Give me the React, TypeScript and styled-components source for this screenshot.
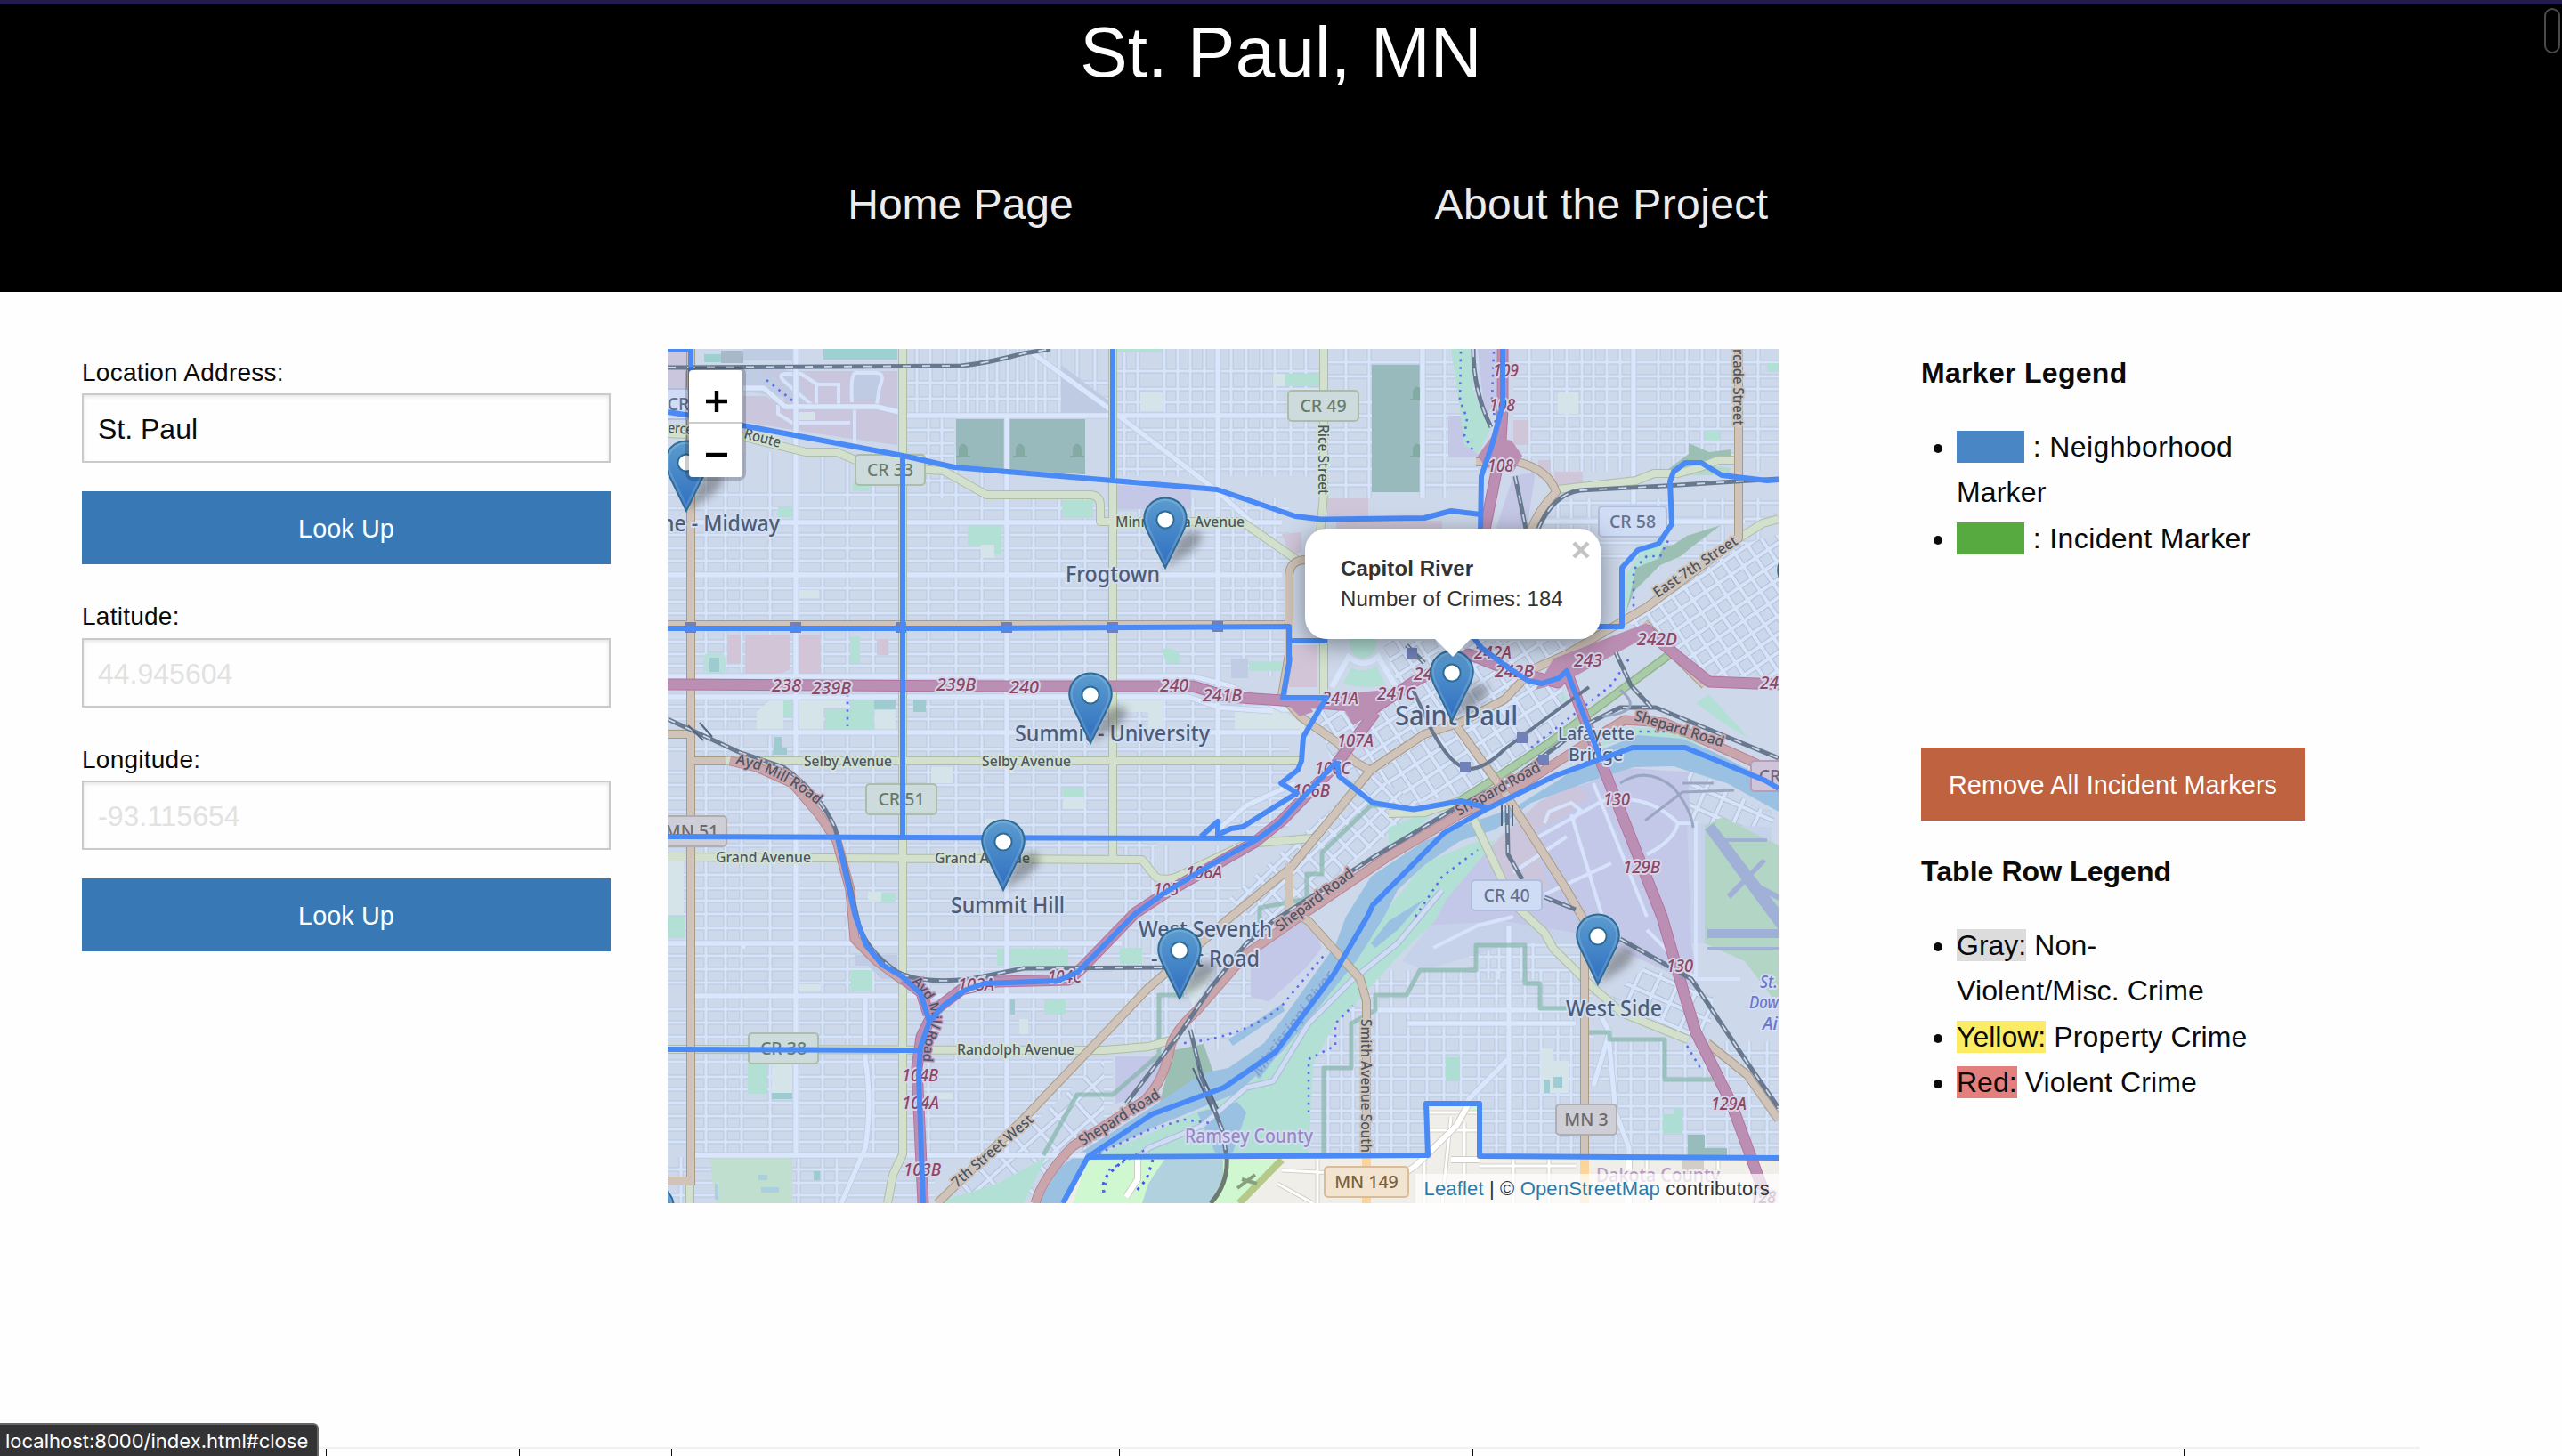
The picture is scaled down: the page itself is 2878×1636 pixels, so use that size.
import React from "react";
import styled, { createGlobalStyle } from "styled-components";

const sans = '"Liberation Sans", Arial, sans-serif';
const mapFont = '"Noto Sans", "Open Sans", sans-serif';

const GlobalStyle = createGlobalStyle`
  *, *::before, *::after { box-sizing: border-box; }
  body { margin: 0; background: #fefefe; color: #0a0a0a; font-family: ${sans}; }
`;

/* ---------- page frame ---------- */

const Page = styled.div`
  position: relative;
  display: flex;
  flex-direction: column;
  width: 2878px;
  height: 1636px;
  overflow: hidden;
  background: #fefefe;
`;

const Header = styled.header`
  flex: none;
  height: 328px;
  background: #000;
  border-top: 5px solid #231c4d;
`;

const Title = styled.h1`
  margin: 0;
  padding-top: 2px;
  font-size: 80px;
  font-weight: 400;
  line-height: 104px;
  letter-spacing: 0.2px;
  text-align: center;
  color: #fefefe;
`;

const Nav = styled.nav`
  display: grid;
  grid-template-columns: 720px 720px;
  justify-content: center;
  padding-top: 89px;
`;

const NavLink = styled.a<{ $spacing?: number }>`
  font-size: 48px;
  line-height: 60px;
  letter-spacing: ${(p) => p.$spacing ?? 0}px;
  text-align: center;
  color: #ececec;
`;

const ScrollThumb = styled.div`
  position: absolute;
  top: 9px;
  right: 2px;
  width: 18px;
  height: 51px;
  border: 2px solid #4a4a4a;
  border-radius: 9px;
`;

const Main = styled.main`
  display: flex;
  flex: none;
  height: 1298px;
  padding: 64px 0 0 92px;
`;

/* ---------- search form ---------- */

const Form = styled.div`
  flex: none;
  width: 594px;
`;

const Label = styled.label`
  display: block;
  height: 50.4px;
  padding-top: 2px;
  font-size: 28px;
  line-height: 50.4px;
  letter-spacing: 0.25px;
`;

const Input = styled.input`
  display: block;
  width: 100%;
  height: 78px;
  margin: 0 0 32px;
  padding: 3px 16px 0;
  border: 2px solid #cacaca;
  border-radius: 0;
  outline: none;
  background: #fefefe;
  box-shadow: inset 0 2px 4px rgba(10, 10, 10, 0.1);
  font-family: ${sans};
  font-size: 32px;
  color: #0a0a0a;
  &::placeholder { color: #e2e2e2; opacity: 1; }
`;

const Button = styled.button<{ $tone: string; $wide?: boolean }>`
  display: block;
  width: ${(p) => (p.$wide ? "100%" : "431px")};
  height: 81.8px;
  margin: 0 0 32px;
  padding: 3px 0 0;
  border: 0;
  background: ${(p) => p.$tone};
  font-family: ${sans};
  font-size: 28.8px;
  letter-spacing: 0.1px;
  color: #fefefe;
  white-space: nowrap;
`;

/* ---------- legend ---------- */

const Legend = styled.aside`
  flex: none;
  width: 431px;
  margin-left: 160px;
  padding-top: 2px;
`;

const LegendTitle = styled.p<{ $spacing: number }>`
  margin: 0 0 32px;
  font-size: 32px;
  font-weight: 700;
  line-height: 51.2px;
  letter-spacing: ${(p) => p.$spacing}px;
`;

const LegendList = styled.ul<{ $height?: number }>`
  height: ${(p) => (p.$height ? `${p.$height}px` : "auto")};
  margin: 0;
  padding: 0 0 0 40px;
  list-style: disc outside;
  font-size: 32px;
  line-height: 51.2px;
  letter-spacing: 0.15px;
  white-space: nowrap;
`;

const Swatch = styled.span<{ $tone: string }>`
  padding-left: 76.4px;
  background: ${(p) => p.$tone};
`;

const Wider = styled.span`
  letter-spacing: 0.4px;
`;

const Mark = styled.span<{ $tone: string }>`
  letter-spacing: 0;
  background: ${(p) => p.$tone};
`;

/* ---------- map chrome ---------- */

const MapBox = styled.div`
  position: relative;
  flex: none;
  width: 1248px;
  height: 960px;
  margin-left: 64px;
  overflow: hidden;
  background: #cdd8ea;
`;

const MapSvg = styled.svg`
  display: block;
  width: 1248px;
  height: 960px;
`;

const ZoomControl = styled.div`
  position: absolute;
  left: 20px;
  top: 20px;
  display: flex;
  flex-direction: column;
  width: 68px;
  border: 4px solid rgba(0, 0, 0, 0.2);
  border-radius: 8px;
  background-clip: padding-box;
`;

const ZoomButton = styled.div<{ $first?: boolean }>`
  display: flex;
  justify-content: center;
  height: 60px;
  padding: 22px 0 0 2px;
  background: #fff;
  border-bottom: ${(p) => (p.$first ? "2px solid #ccc" : "0")};
  border-radius: ${(p) => (p.$first ? "4px 4px 0 0" : "0 0 4px 4px")};
`;

const Popup = styled.div`
  position: absolute;
  left: 716px;
  top: 202px;
  width: 332px;
  height: 124px;
  padding: 28px 0 0 40px;
  border-radius: 24px;
  background: #fff;
  box-shadow: 0 6px 28px rgba(0, 0, 0, 0.4);
  font-size: 24px;
  line-height: 33.6px;
  letter-spacing: 0.08px;
  color: #333;
  white-space: nowrap;
`;

const PopupTip = styled.div`
  position: absolute;
  left: 861px;
  top: 325px;
  width: 0;
  height: 0;
  border-left: 21px solid transparent;
  border-right: 21px solid transparent;
  border-top: 21px solid #fff;
`;

const PopupClose = styled.svg`
  position: absolute;
  right: 12px;
  top: 14px;
  width: 20px;
  height: 20px;
`;

const Attribution = styled.div`
  position: absolute;
  right: 0;
  bottom: 0;
  height: 33px;
  padding: 0 10px;
  background: rgba(255, 255, 255, 0.7);
  font-size: 22px;
  line-height: 33px;
  letter-spacing: 0.15px;
  color: #333;
  white-space: nowrap;
  a { color: #2f7ba8; }
`;

/* ---------- table head and status bubble ---------- */

const TableHead = styled.div`
  display: flex;
  flex: none;
  width: 2558px;
  height: 10px;
  margin-left: 160px;
  border-top: 2px solid #f1f1f1;
`;

const HeadCell = styled.div<{ $w: number; $last?: boolean }>`
  flex: none;
  width: ${(p) => p.$w}px;
  border-right: ${(p) => (p.$last ? "0" : "1px solid #0a0a0a")};
`;

const StatusBubble = styled.div`
  position: absolute;
  left: 0;
  bottom: 0;
  width: 358px;
  height: 37px;
  padding-left: 6px;
  border-top: 2px solid #666668;
  border-right: 2px solid #666668;
  border-top-right-radius: 6px;
  background: #333335;
  font-family: Inter, sans-serif;
  font-size: 22px;
  line-height: 36px;
  color: #fff;
  white-space: nowrap;
`;

/* ---------- map data ---------- */

type Grid = { x: [number, number]; y: [number, number]; xs: number[]; ys: number[] };

const WEST_XS = [793, 815, 833, 865, 924, 952, 981, 1043, 1074, 1103, 1161, 1190, 1219, 1280, 1308, 1340, 1397, 1427];

const grids: Grid[] = [
  { x: [750, 1140], y: [508, 700], xs: [793, 815, 833, 865, 924, 952, 981, 1043, 1074, 1103], ys: [556, 571, 601, 616, 630, 661, 676, 689] },
  { x: [1131, 1448], y: [560, 700], xs: [1161, 1190, 1219, 1280, 1308, 1340, 1385, 1400, 1417, 1432], ys: [571, 601, 616, 630, 661, 676, 689] },
  { x: [1018, 1250], y: [392, 470], xs: [1030, 1045, 1061, 1077, 1087, 1098, 1109, 1120, 1132, 1143, 1153, 1164, 1174, 1190, 1210, 1230], ys: [430, 448] },
  { x: [1018, 1072], y: [470, 560], xs: [1043, 1058], ys: [483, 498, 512, 540] },
  { x: [1254, 1484], y: [392, 535], xs: [1263, 1278, 1308, 1323, 1337, 1353, 1383, 1400, 1417, 1432, 1450, 1467], ys: [417, 437, 452, 483, 497, 512, 527] },
  { x: [1491, 1600], y: [392, 560], xs: [1512, 1538], ys: [407, 423, 452, 467, 483, 497, 512, 527, 545] },
  { x: [1598, 1660], y: [392, 560], xs: [1623], ys: [407, 423, 437, 452, 467, 482, 497, 511, 527, 545] },
  { x: [1700, 1998], y: [392, 530], xs: [1718, 1743, 1760, 1777, 1790, 1805, 1820, 1863, 1880, 1895, 1912, 1930, 1975], ys: [407, 423, 437, 452, 467, 482, 497, 511] },
  { x: [1735, 1998], y: [560, 640], xs: [1750, 1765, 1785, 1863, 1915, 1935, 1975], ys: [565, 583, 610, 625] },
  { x: [750, 1448], y: [708, 760], xs: WEST_XS, ys: [721, 735, 748] },
  { x: [750, 1448], y: [780, 940], xs: WEST_XS, ys: [794, 808, 842, 868, 882, 897, 912, 927] },
  { x: [750, 1300], y: [940, 1060], xs: WEST_XS, ys: [950, 983, 998, 1012, 1027, 1043] },
  { x: [750, 1250], y: [1060, 1300], xs: WEST_XS, ys: [1074, 1089, 1104, 1134, 1149, 1165, 1193, 1210, 1224, 1239, 1254, 1269, 1283] },
  { x: [1250, 1420], y: [950, 1180], xs: [1250, 1265, 1280, 1295, 1310, 1340, 1368, 1397], ys: [998, 1012, 1027, 1043, 1074, 1104, 1119, 1134, 1149, 1164] },
  { x: [750, 1050], y: [1300, 1352], xs: [765, 897, 924, 940], ys: [1314, 1329, 1343] },
  { x: [1470, 1790], y: [1090, 1298], xs: [1492, 1507, 1520, 1547, 1563, 1582, 1603, 1622, 1641, 1661, 1681, 1713, 1731, 1750, 1765], ys: [1105, 1119, 1135, 1165, 1183, 1197, 1212, 1230, 1248, 1260, 1275, 1287] },
  { x: [1790, 1998], y: [1170, 1298], xs: [1815, 1832, 1850, 1866, 1893, 1915, 1940, 1965, 1985], ys: [1183, 1198, 1212, 1230, 1243, 1257, 1272, 1287] },
  { x: [1650, 1780], y: [1040, 1100], xs: [1660, 1672, 1684, 1697, 1709, 1722], ys: [1050, 1062, 1075, 1090] },
];

const majorStreets = [
  "M894 392V1300", "M1131 467V1298", "M1368 392V940", "M835 1060V1066", "M750 587H1440", "M750 646H1440",
  "M1018 467H1484", "M750 823H1460", "M750 760H1340L1380 770L1440 797H1455", "M750 783H1335L1370 795L1430 799",
  "M750 1060H1260", "M780 1119H1290", "M780 1298H1220", "M972 1119V1190Q980 1240 972 1290L945 1352", "M1598 392V560",
  "M1835 392V566", "M1695 1040V1298", "M1540 1135H1780", "M1580 1150H1770", "M1160 397L1250 462L1365 550L1410 590",
  "M835 436H858L882 457L920 457H985L1010 463", "M1735 586H1960", "M1365 935L1400 905L1455 880",
  "M1795 1135L1808 1160L1790 1220", "M1807 1165L1815 1250L1830 1290V1352", "M1694 1190L1650 1235L1640 1255",
];

const rotatedGrids = [
  { clip: "M1478 800L1560 720H1760L1750 830L1700 870L1640 892L1560 908L1500 870Z", cx: 1620, cy: 810, angle: -33, step: 19, size: 330 },
  { clip: "M1380 1010L1540 870L1600 905L1500 985L1420 1040Z", cx: 1480, cy: 950, angle: -44, step: 19, size: 260 },
  { clip: "M1830 700L1955 612L1998 600V760L1930 760L1880 735Z", cx: 1920, cy: 690, angle: -34, step: 17, size: 250 },
  { clip: "M1070 1340L1160 1262L1240 1190V1270L1180 1320L1150 1352H1060Z", cx: 1150, cy: 1290, angle: -42, step: 26, size: 260 },
  { clip: "M1810 1120L1850 1085L1925 1120L1920 1170L1895 1165Z", cx: 1860, cy: 1130, angle: 24, step: 22, size: 150 },
  { clip: "M1895 860L1998 920V930L1900 925Z", cx: 1920, cy: 900, angle: 24, step: 22, size: 150 },
];

const areas: [string, string][] = [
  ["#bfcce4", "M835 392H890V405H835ZM783 410H880L905 450L840 440Z"],
  ["#c9c6dd", "M750 392H772V440H750ZM845 417H1008V500L950 492L835 474V445L860 445L885 460L870 420Z"],
  ["#bfcbe3", "M874 420H895L908 452L882 450ZM957 420H992L988 450H957ZM1192 410L1245 450V464H1192Z"],
  ["#9dd0d0", "M791 398H810V407H791ZM925 392H1008V404H925Z"],
  ["#a9b8c8", "M810 394H835V408H810Z"],
  ["#b3e0d5", "M1254 392H1305V396H1254ZM1444 420H1482V434H1444ZM874 569H890V581H874ZM958 543H978V552H958ZM1087 590H1125V623H1110V613H1087Z"],
  ["#98babc", "M1074 471H1219V533L1074 525ZM1541 410H1595V553H1541Z"],
  ["#c4c8e6", "M1255 545L1338 550V572H1255ZM1627 467H1660V514H1627ZM1660 392H1680V450L1668 470ZM1680 595L1700 535L1725 530L1715 595Z"],
  ["#b3e0d5", "M1193 562H1228V582H1193ZM1630 392H1652L1655 440L1675 480L1660 510L1645 500L1640 460Z"],
  ["#d5e4e8", "M1281 441H1306V462H1281ZM1430 420H1443V434H1430ZM895 463H915V472H895ZM1750 441H1773V465H1750ZM1102 612H1117V627H1102ZM898 663H920V672H898Z"],
  ["#cfc6d9", "M1491 560H1537V580H1491ZM1440 600L1462 598V620L1450 625ZM1746 530H1778V545H1746ZM1728 517H1742V537H1728ZM1700 472H1717V500H1700ZM1501 585H1620V594H1501Z"],
  ["#9bc0b3", "M1873 528L1897 510V498L1920 508L1945 505V516L1910 528L1895 532ZM1826 690L1836 640L1845 622L1880 612L1895 602L1933 590L1900 615L1888 625L1865 635L1835 665Z"],
  ["#b3e0d5", "M1915 483H1932V495H1915ZM1985 408H1998V418H1985ZM1827 645L1842 622L1862 612L1872 606L1862 628L1838 638L1826 690Z"],
  ["#b5d8c8", "M1880 535L1908 522L1945 526L1940 534L1900 534Z"],
  ["#d3c5d8", "M837 713H888V752L870 760H837ZM898 713H922V758H898ZM817 713H832V745H817ZM985 718H998V736H985ZM1448 725H1480V772H1448Z"],
  ["#b9dfdc", "M790 737L795 733H812L815 740V755L810 760H795L791 752Z"],
  ["#9dcbd0", "M797 739H808V755H797ZM1026 782H1040V800H1026ZM980 784H1006V797H980ZM870 828H878V840H884V848H868Z"],
  ["#b3e0d5", "M955 715H966V745H955ZM873 785H890V805H873ZM927 797H955V784H982V819H927ZM1305 730Q1315 725 1325 735L1325 745H1310ZM1403 743H1440V754H1403ZM1194 885H1218V896H1194Z"],
  ["#d5e4e8", "M898 783H950V795H925V820H898ZM983 798H1006V820H983ZM850 800L870 782H880V820H850ZM1046 862H1070V880H1046ZM1194 897H1218V909H1194ZM1257 782H1306V820H1290V800H1257ZM1387 797H1440L1465 815V826H1387ZM975 1002H990V1013H975ZM1107 920H1120V935H1107Z"],
  ["#bfcce4", "M1383 740H1402V762H1383ZM961 1073H1008V1100L990 1100L975 1085H961Z"],
  ["#b3e0d5", "M990 1003H1006V1013H990ZM750 1030H770V1054H750ZM956 1090H980V1114H956ZM840 1195H862V1229H840ZM1120 1066H1200V1085H1120ZM1258 1065H1283V1083H1258ZM1173 1123H1197V1140H1173Z"],
  ["#d5e4e8", "M867 1196H890V1228H867ZM898 1106H922V1114H898ZM1145 1145H1155V1162H1145ZM750 968H768V1028H750ZM1330 1105L1365 1090L1340 1132ZM1040 1228H1070V1235H1040Z"],
  ["#9dcbd0", "M867 1228H890V1235H867ZM914 1316H921V1326H914ZM1135 1123H1140V1140H1135Z"],
  ["#c1dfce", "M798 1302H890V1352H805L800 1325Z"],
  ["#a9cfe0", "M852 1320H862V1326H852ZM855 1334H875V1340H855ZM803 1330H807V1348H803Z"],
  ["#b3e0d5", "M1510 760L1520 748H1545L1560 770H1507ZM1515 718H1545L1540 738Q1530 742 1518 736ZM1725 778L1752 770L1760 785L1740 800ZM1905 790L1920 780L1965 830L1940 815Z"],
  ["#a0c9d8", "M1085 1328L1100 1318L1115 1330L1095 1338ZM1530 885L1545 878L1555 890L1545 902Z"],
  ["#c4c8e8", "M1405 1062L1470 1030L1485 1065L1435 1128L1405 1120ZM1253 1187H1312L1300 1225L1253 1240Z"],
  ["#c5d2e9", "M1575 1080L1700 920L1780 880L1990 910V1060H1700L1600 1090Z"],
  ["#c4c8e8", "M1560 1075L1625 990L1700 935L1770 885L1830 863L1900 868L1965 905V912L1920 915L1895 925L1900 1060L1910 1120L1870 1090L1780 1050L1690 1035L1600 1040Z"],
  ["#cbc6dc", "M1665 960L1730 900L1770 880L1785 895L1760 915L1720 935L1740 1000L1700 1000Z"],
];

const waterAreas: [string, string][] = [
  ["#b3e0d5", "M1205 1352L1240 1295L1300 1270L1390 1228L1440 1185L1500 1100L1560 1020L1600 970L1660 945L1680 945L1625 1010L1612 1035L1575 1070L1520 1130L1500 1150L1475 1195L1470 1297H1225ZM1050 1352L1120 1330L1175 1300L1150 1352ZM1560 930L1620 905L1560 960ZM1790 840L1825 817L1890 820L1920 838L1840 828Z"],
  ["#cdd8ea", "M1395 1165L1420 1130L1470 1085L1500 1060L1480 1100L1440 1165L1380 1205L1360 1200Z"],
  ["#9bc0b3", "M1318 1180L1352 1173L1363 1205L1340 1225L1303 1238Z"],
  ["#9bc1e2", "M1166 1352L1190 1312L1215 1294L1300 1240L1350 1206L1380 1200L1420 1172L1448 1135L1500 1062L1512 1030L1540 985L1600 945L1650 925L1700 908L1750 877L1800 842L1840 826L1890 830L1925 845L1998 882V912L1940 880L1880 861L1835 862L1780 880L1720 902L1680 932L1640 945L1600 972L1570 1000L1555 1030L1525 1078L1475 1140L1440 1182L1390 1228L1300 1265L1240 1293L1205 1352Z"],
  ["#9bc1e2", "M1345 1250L1390 1238L1400 1250L1385 1295H1365ZM1380 1168L1440 1128L1443 1136L1385 1175ZM1540 1060L1560 1035L1600 1010L1570 1045L1545 1065Z"],
  ["#b3d5c5", "M1915 928L1935 918L1998 950V1130L1960 1080L1915 1060Z"],
  ["#a1b0d6", "M1915 932L1925 925L1998 1020V1045ZM1918 1044H1998V1054H1918ZM1935 942H1985V946H1935ZM1940 1005L1980 965L1984 968L1944 1010ZM1918 1064H1998V1067H1918ZM1970 990L1998 1005V1012L1968 996Z"],
];

const openAreas: [string, string][] = [
  ["#f0eee8", "M1222 1300H1998V1352H1195ZM1602 1241H1662V1300H1602Z"],
  ["#cff8d0", "M1222 1303H1440L1392 1352H1205ZM1654 1243H1662V1253H1654Z"],
  ["#b0d1dd", "M1283 1352L1290 1330L1308 1303H1374V1325L1360 1352Z"],
  ["#d3cdca", "M1890 1303H1914V1320H1890Z"],
];

const roads = {
  tertiary: [
    "M1014 392V1297L1003 1320L997 1352", "M1250 392V965", "M815 855H1462", "M750 963L1283 966L1298 985Q1305 990 1320 986L1400 948L1475 942",
    "M750 1179L1240 1180L1290 1176L1318 1168", "M750 487L836 491L905 508H940L975 523L1060 529L1108 556H1225Q1236 557 1236 568V586H1395L1458 630",
    "M1487 392V555L1483 600", "M1487 718V780", "M1750 550L1838 540L1858 532H1885L1910 525L1930 517H1950", "M1953 605L1980 588L1998 583",
    "M1654 918L1700 1015L1735 1048L1745 1066L1790 1110L1822 1138L1896 1168", "M1560 914L1600 913L1640 900", "M775 1330V1352",
  ],
  primary: [
    "M776 392V1332", "M750 1327H778", "M750 702H1448", "M1470 629Q1448 628 1448 648V735L1440 782L1462 806L1503 835L1520 855L1538 865",
    "M1953 392V605L1850 682L1760 735L1722 752L1690 786L1640 812L1600 825L1540 865L1450 975L1383 1030L1290 1110L1150 1257L1053 1352",
    "M1448 970V1022L1470 1035L1528 1100L1535 1125V1298", "M1632 810L1690 890L1760 1000L1780 1035V1298", "M1847 700L1890 745L1915 770",
    "M1658 519H1705Q1740 528 1748 553Q1728 572 1718 600", "M750 825H775", "M776 855H815", "M1918 1172L1963 1208L1998 1258",
  ],
  trunk: ["M1163 1352Q1172 1322 1205 1288L1285 1237Q1308 1215 1315 1175Q1320 1158 1345 1135L1400 1072L1460 1030L1560 962L1640 915L1700 888L1790 830L1825 809L1870 812L1960 852L1998 870", "M820 855L850 862L890 880L920 915L940 945L955 1000L960 1055L985 1080L1015 1102"],
  motorway: [
    "M750 769L1130 771H1340L1380 783L1440 787L1545 795L1590 765L1650 735L1700 755L1750 767L1770 745L1850 708L1885 738L1920 766L1998 769",
    "M1688 392V460L1685 510L1667 600", "M1037 1352L1030 1200L1035 1165L1050 1135L1080 1112L1120 1103L1200 1101L1215 1088L1275 1026L1310 1003L1410 946L1440 922L1500 860L1545 800", "M1015 1100L1035 1115L1043 1140",
    "M1760 755L1800 860L1867 1030L1890 1110L1905 1160L1945 1240L1986 1352",
  ],
};

const rails = [
  "M750 413L1080 411Q1110 408 1150 397L1180 392", "M750 808L830 845L880 862Q920 890 938 930L950 975L965 1040Q975 1070 1008 1092Q1035 1106 1090 1100L1150 1088L1310 1087L1350 1080",
  "M1655 392Q1655 440 1675 480", "M1702 535L1714 594", "M1728 594Q1745 555 1775 551L1870 546L1998 538", "M1265 1240L1325 1162L1360 1110L1400 1060L1430 1035L1540 965L1640 905L1700 875L1780 815L1820 795H1860L1998 852",
  "M1337 1157L1350 1210L1373 1270L1378 1300", "M1815 733L1832 770L1855 795", "M1693 905L1694 960L1710 988", "M1735 1008L1770 1022", "M1820 1055L1900 1100L1960 1190L1998 1245", "M1580 725L1600 745",
];

const trailPaths = ["M1234 1296L1290 1270L1330 1258L1360 1262", "M861 427L880 442L890 450", "M1641 395L1640 450L1648 470L1645 490L1657 510", "M1678 395L1676 450L1680 475", "M1240 1340L1245 1315L1290 1290", "M1835 690V640L1850 625H1865L1875 605", "M1560 965L1600 935", "M1590 1030L1620 985L1660 955", "M1330 1172Q1400 1165 1440 1130L1490 1070", "M1470 1250V1190L1500 1175V1150L1520 1130", "M1720 840L1810 770L1830 740", "M1790 822H1880", "M952 780V816", "M1895 1175L1910 1200"];
const cyclePaths = ["M1172 1298L1210 1230H1250L1302 1185V1118H1330", "M1560 1118H1580L1595 1090H1658V1062H1713V1105H1730V1133H1780V1160H1808V1168H1870V1213H1925", "M1487 1298V1200H1518V1150L1545 1135V1118H1560", "M1415 1040V1020L1468 1010V982H1485V958L1540 905L1560 905"];

const boundaries = [
  "M750 392H776V467", "M750 463L776 467L1014 512L1072 525L1250 540L1367 550L1455 580L1484 583.5L1600 582L1630 574L1663 578",
  "M1014 512V940", "M1250 392V540", "M750 706L1100 706L1448 704V745L1441 784H1490L1464 828L1462 855L1458 865L1439 880L1457 891L1396 929L1383 931L1368 938", "M1349 940L1368 923V941",
  "M1448 720H1491", "M750 940L1010 941L1414 942", "M1502 855L1437 925L1414 942L1353 976L1307 1004L1275 1027L1211 1092L1188 1102L1106 1105L1083 1113L1060 1130L1044 1148L1034 1177L1032 1209L1037 1352",
  "M1502 855L1504 872L1542 902L1588 909.5L1641 900L1672 908", "M941 942L961 1030L973 1062L991 1084L1013 1097L1034 1116L1044 1148", "M750 1179L1034 1180",
  "M1194 1352L1222 1300L1294 1252L1375 1222L1433 1182L1498 1095L1536 1030L1542 1017L1622 936L1672 908L1746 872L1798 853L1834 840H1893L1983 877L1998 886",
  "M1655 716L1664 728L1698 753L1717 765L1732 768L1751 762L1760 754L1798 853", "M1688 392V455L1676 500L1664 535L1663 600",
  "M1998 539L1985 540L1934 534L1911 520H1893L1880 530L1876 541L1878 589L1863 611L1840 618L1822 638V704H1790", "M1222 1300L1604 1298L1602 1240H1662V1299L1998 1301",
];

type Txt = { t: string; x: number; y: number; w: number; s?: number; r?: number; c?: string; i?: boolean; b?: boolean; h?: string };

const PLACE = "#4c5c78";
const STREET = "#4a5566";
const labels: Txt[] = [
  { t: "Frogtown", x: 1197, y: 654, w: 106, s: 25, c: PLACE },
  { t: "ne - Midway", x: 743, y: 597, w: 133, s: 25, c: PLACE },
  { t: "Summit - University", x: 1140, y: 833, w: 219, s: 25, c: PLACE },
  { t: "Summit Hill", x: 1068, y: 1026, w: 128, s: 25, c: PLACE },
  { t: "West Seventh", x: 1279, y: 1053, w: 150, s: 25, c: PLACE },
  { t: "- Fort Road", x: 1293, y: 1086, w: 122, s: 25, c: PLACE },
  { t: "West Side", x: 1759, y: 1142, w: 108, s: 25, c: PLACE },
  { t: "Saint Paul", x: 1567, y: 815, w: 138, s: 30, c: PLACE },
  { t: "Lafayette", x: 1750, y: 831, w: 86, s: 20, c: PLACE },
  { t: "Bridge", x: 1762, y: 855, w: 61, s: 20, c: PLACE },
  { t: "Ramsey County", x: 1331, y: 1284, w: 144, s: 21, c: "#9a87c3" },
  { t: "Dakota County", x: 1793, y: 1328, w: 139, s: 21, c: "#b79bc0", h: "#f0eee8" },
  { t: "Selby Avenue", x: 903, y: 861, w: 99, s: 16.5, h: "#d3e1cf" },
  { t: "Selby Avenue", x: 1103, y: 861, w: 100, s: 16.5, h: "#d3e1cf" },
  { t: "Grand Avenue", x: 804, y: 969, w: 107, s: 16.5, h: "#d3e1cf" },
  { t: "Grand Avenue", x: 1050, y: 970, w: 107, s: 16.5, h: "#d3e1cf" },
  { t: "Minnehaha Avenue", x: 1253, y: 592, w: 145, s: 16.5, h: "#d3e1cf" },
  { t: "Randolph Avenue", x: 1075, y: 1185, w: 132, s: 16.5, h: "#d3e1cf" },
  { t: "erce", x: 750, y: 486, w: 28, s: 16, r: 4, h: "#d3e1cf" },
  { t: "Route", x: 835, y: 492, w: 42, s: 16.5, r: 15, h: "#d3e1cf" },
  { t: "Rice Street", x: 1481, y: 477, w: 79, s: 16.5, r: 90, h: "#d3e1cf" },
  { t: "rcade Street", x: 1947, y: 392, w: 86, s: 16.5, r: 90, h: "#d0c4ba" },
  { t: "East 7th Street", x: 1862, y: 672, w: 110, s: 16.5, r: -34, h: "#d0c4ba" },
  { t: "Shepard Road", x: 1639, y: 917, w: 106, s: 16.5, r: -29, h: "#c9a5ac" },
  { t: "Shepard Road", x: 1835, y: 809, w: 104, s: 16.5, r: 17, h: "#c9a5ac" },
  { t: "Shepard Road", x: 1216, y: 1288, w: 104, s: 16.5, r: -32, h: "#c9a5ac" },
  { t: "Shepard Road", x: 1438, y: 1047, w: 105, s: 16.5, r: -37, h: "#c9a5ac" },
  { t: "7th Street West", x: 1075, y: 1335, w: 115, s: 16.5, r: -41, h: "#d0c4ba" },
  { t: "Smith Avenue South", x: 1529, y: 1145, w: 150, s: 16.5, r: 90, h: "#d0c4ba" },
  { t: "Mississippi River", x: 1414, y: 1210, w: 142, s: 16, r: -53, c: "#7d9fd2", i: true, h: "#9bc1e2" },
  { t: "St.", x: 1977, y: 1110, w: 20, s: 20, c: "#6c76cc", i: true },
  { t: "Dow", x: 1965, y: 1133, w: 33, s: 20, c: "#6c76cc", i: true },
  { t: "Ai", x: 1980, y: 1157, w: 17, s: 20, c: "#6c76cc", i: true },
];

const exits: [string, number, number, number][] = [
  ["109", 1677, 423, 29], ["108", 1673, 462, 29], ["108", 1671, 530, 29], ["238", 867, 777, 33], ["239B", 912, 780, 44], ["239B", 1052, 776, 44],
  ["240", 1134, 779, 33], ["240", 1303, 777, 32], ["241B", 1351, 788, 44], ["241A", 1485, 791, 41], ["241C", 1547, 786, 43], ["242", 1588, 764, 32],
  ["242A", 1656, 740, 42], ["242B", 1679, 761, 44], ["243", 1768, 749, 32], ["242D", 1839, 725, 45], ["24", 1977, 774, 21], ["107A", 1502, 839, 41],
  ["106C", 1477, 870, 40], ["106B", 1452, 895, 42], ["106A", 1332, 987, 41], ["105", 1296, 1006, 28], ["130", 1801, 905, 30], ["129B", 1823, 981, 42],
  ["130", 1872, 1092, 30], ["129A", 1922, 1247, 40], ["104B", 1013, 1215, 41], ["104A", 1013, 1246, 42], ["103B", 1015, 1321, 42], ["103A", 1076, 1113, 41],
  ["104C", 1177, 1104, 38], ["128", 1966, 1352, 29],
];

type Shield = { t: string; x: number; y: number; w: number; tone: "green" | "blue" | "tan" | "gray" | "pink" };
const tones = {
  green: ["#cddbdc", "#abbca9", "#697c6c"],
  blue: ["#cfdcf4", "#afbedc", "#65728f"],
  tan: ["#f3e4cf", "#dabd98", "#7a5f3c"],
  gray: ["#cecfd6", "#b1aeb2", "#6d6a6c"],
  pink: ["#cfc5da", "#b59db8", "#75657c"],
};
const shields: Shield[] = [
  { t: "CR", x: 725, y: 437, w: 74, tone: "blue" },
  { t: "CR 33", x: 961, y: 511, w: 78, tone: "green" },
  { t: "CR 49", x: 1447, y: 439, w: 79, tone: "green" },
  { t: "CR 58", x: 1796, y: 569, w: 76, tone: "blue" },
  { t: "CR 51", x: 973, y: 881, w: 79, tone: "green" },
  { t: "CR 38", x: 841, y: 1161, w: 78, tone: "green" },
  { t: "MN 51", x: 738, y: 917, w: 78, tone: "gray" },
  { t: "CR 40", x: 1653, y: 989, w: 79, tone: "blue" },
  { t: "MN 3", x: 1748, y: 1241, w: 68, tone: "gray" },
  { t: "MN 149", x: 1488, y: 1311, w: 94, tone: "tan" },
  { t: "CR", x: 1967, y: 855, w: 42, tone: "pink" },
];

const pins: [number, number][] = [[733, 1412], [771, 575], [2021, 697], [1309, 639], [1631, 811], [1225, 836], [1127, 1001], [1795, 1107], [1325, 1123]];
const stations: [number, number][] = [[1586, 734], [1646, 862], [1710, 829], [1734, 854], [776, 705], [894, 705], [1012, 705], [1131, 705], [1250, 705], [1368, 704]];
const tombs: [number, number][] = [[1082, 512], [1146, 512], [1210, 512], [1592, 448], [1592, 512]];

/* ---------- map drawing ---------- */

const gridPath = (g: Grid) =>
  g.xs.filter((x) => x > g.x[0] && x < g.x[1]).map((x) => `M${x} ${g.y[0]}V${g.y[1]}`).join("") +
  g.ys.map((y) => `M${g.x[0]} ${y}H${g.x[1]}`).join("");

const streetPath = grids.map(gridPath).join("");

const turnedPath = (size: number, step: number) => {
  let d = "";
  for (let v = -size / 2; v <= size / 2; v += step) {
    d += `M${v} ${-size / 2}V${size / 2}M${-size / 2} ${v}H${size / 2}`;
  }
  return d;
};

function Cased({ d, fill, casing, w, edge = 2 }: { d: string; fill: string; casing: string; w: number; edge?: number }) {
  return (
    <g fill="none" strokeLinejoin="round">
      <path d={d} stroke={casing} strokeWidth={w + edge} />
      <path d={d} stroke={fill} strokeWidth={w} />
    </g>
  );
}

function MapText({ t, x, y, w, s = 16, r = 0, c = STREET, i, b, h = "#d2def2" }: Txt) {
  return (
    <text
      transform={`translate(${x} ${y}) rotate(${r})`}
      textLength={w}
      lengthAdjust="spacingAndGlyphs"
      fontFamily={mapFont}
      fontSize={s}
      fontStyle={i ? "italic" : "normal"}
      fontWeight={b ? 600 : 500}
      fill={c}
      stroke={h}
      strokeWidth={4}
      strokeLinejoin="round"
      paintOrder="stroke"
    >
      {t}
    </text>
  );
}

function Pin({ x, y }: { x: number; y: number }) {
  return (
    <g transform={`translate(${x - 25} ${y - 81})`}>
      <path d="M25 80L38 50Q50 34 64 40Q70 48 54 62Z" fill="#2a2a2a" opacity="0.36" filter="url(#pinShadow)" />
      <path
        d="M25 1.5C11.5 1.5 1.2 12 1.2 25C1.2 33 5 39 8 45L25 80L42 45C45 39 48.8 33 48.8 25C48.8 12 38.5 1.5 25 1.5Z"
        fill="url(#pinFill)"
        stroke="#2e6c97"
        strokeWidth="2"
      />
      <path
        d="M25 3.8C13 3.8 3.6 13.4 3.6 25C3.6 32 7 38 10 44L25 75L40 44C43 38 46.4 32 46.4 25C46.4 13.4 37 3.8 25 3.8Z"
        fill="none"
        stroke="#fff"
        strokeOpacity="0.14"
        strokeWidth="2.4"
      />
      <circle cx="25" cy="26" r="9.6" fill="#fff" stroke="#2e6c97" strokeWidth="2" />
    </g>
  );
}

function CityMap() {
  return (
    <MapSvg viewBox="750 392 1248 960">
      <defs>
        <linearGradient id="pinFill" x1="0" y1="0" x2="0" y2="1">
          <stop offset="0" stopColor="#5b9ccf" />
          <stop offset="1" stopColor="#2e6ec0" />
        </linearGradient>
        <filter id="pinShadow" x="-50%" y="-50%" width="200%" height="200%">
          <feGaussianBlur stdDeviation="5" />
        </filter>
        <clipPath id="openClip">
          <path d="M1222 1300H1998V1352H1195ZM1602 1241H1662V1300H1602Z" />
        </clipPath>
        <clipPath id="cemeteryClip">
          <path d="M1074 471H1219V533H1074ZM1541 410H1595V553H1541Z" />
        </clipPath>
        <path id="aydMill" d="M826 858Q880 870 922 908" />
        <path id="aydMillSouth" d="M1024 1103Q1050 1128 1046 1150Q1036 1172 1037 1200" />
        {rotatedGrids.map((g, i) => (
          <clipPath id={`turned${i}`} key={i}><path d={g.clip} /></clipPath>
        ))}
      </defs>

      <rect x="750" y="392" width="1248" height="960" fill="#cdd8ea" />
      <Cased d={streetPath} fill="#d6e3f9" casing="#b9c7db" w={3.2} edge={1.8} />
      {areas.map(([fill, d], i) => <path key={i} d={d} fill={fill} />)}
      {rotatedGrids.map((g, i) => (
        <g key={i} clipPath={`url(#turned${i})`}>
          <path d={g.clip} fill="#cbd7ea" />
          <g transform={`translate(${g.cx} ${g.cy}) rotate(${g.angle})`}>
            <Cased d={turnedPath(g.size, g.step)} fill="#d6e3f9" casing="#b3c1d8" w={4} edge={2} />
          </g>
        </g>
      ))}
      <g fill="none" stroke="#d6e3fa" strokeWidth="4">
        <path d="M884 420Q870 420 885 432L912 455M884 420H900L918 432H942V455M917 432V455M957 452Q955 418 962 419H985Q995 420 988 435L985 455M874 455V465L890 475H955M960 455V500" />
        <path d="M1735 925L1740 912L1765 902L1775 910L1768 920" />
        <path d="M1765 915L1800 1030M1790 880L1850 1030M1720 945L1800 900Q1850 890 1885 925H1905V1100M1700 980L1760 940M1735 1005L1810 970M1850 960Q1880 945 1885 925" />
        <path d="M1850 1045L1905 1100L1955 1100M1610 1065L1660 1040L1700 1030" />
      </g>
      <path d="M1505 745L1520 716H1550L1575 780H1498Z" fill="#cdd8ea" />
      <path d="M1509 768L1518 750Q1532 758 1546 748L1557 770Q1530 775 1509 768ZM1516 718H1546Q1548 738 1530 740Q1516 738 1516 718Z" fill="#b3e0d5" />
      <path d="M1496 772L1515 738Q1532 752 1548 738L1572 778" fill="none" stroke="#d8e5fb" strokeWidth="6" />
      {waterAreas.map(([fill, d], i) => <path key={i} d={d} fill={fill} />)}
      <Cased d="M1230 1350L1290 1290L1350 1265L1400 1222L1430 1215L1470 1150L1520 1100L1570 1060L1620 1000" fill="#cfdcf4" casing="#a9bbd8" w={5} />
      <Cased d={majorStreets.join("")} fill="#d9e6fc" casing="#bdcadf" w={5.4} edge={1.6} />

      {openAreas.map(([fill, d], i) => <path key={i} d={d} fill={fill} />)}
      <g clipPath="url(#openClip)">
        <Cased d="M1480 1303V1352M1440 1315L1500 1318M1435 1330L1475 1352M1600 1250H1660M1605 1270H1660M1630 1255L1620 1352M1645 1262V1352M1662 1310H1770M1700 1303V1352M1740 1303V1352M1850 1303V1352M1930 1303V1352M1600 1303V1352" fill="#fff" casing="#d4d0ca" w={3} />
        <Cased d="M1650 1240L1636 1265L1590 1310L1560 1330M1630 1303H1662M1830 1303V1352M1278 1300L1278 1325L1265 1345" fill="#fff" casing="#cfcbc5" w={6} />
        <path d="M1392 1352L1440 1303" stroke="#b5c98a" strokeWidth="8" />
        <path d="M1535 1300V1352M1780 1300V1352" stroke="#fbd49a" strokeWidth="10" />
        <path d="M1378 1300Q1380 1330 1360 1352" fill="none" stroke="#6e7a70" strokeWidth="5" />
        <path d="M1390 1335L1410 1320M1395 1325L1412 1330" stroke="#8aa07c" strokeWidth="4" />
        <path d="M1240 1340Q1236 1325 1250 1315L1270 1296M1295 1303L1288 1325L1275 1340" fill="none" stroke="#4452f0" strokeWidth="3" strokeDasharray="3 6" />
      </g>

      <g fill="none" stroke="#7fb4a5" strokeOpacity="0.65" strokeWidth="5" strokeLinejoin="round">
        {cyclePaths.map((d, i) => <path key={i} d={d} />)}
      </g>
      <g fill="none" stroke="#5b6df0" strokeWidth="2.6" strokeDasharray="2.6 6">
        {trailPaths.map((d, i) => <path key={i} d={d} />)}
      </g>

      <Cased d={roads.tertiary.join("")} fill="#d2e0cd" casing="#aebda3" w={8} />
      <path d="M1640 900L1690 868L1740 835L1883 730" fill="none" stroke="#8fb48b" strokeWidth="10" />
      <path d="M1640 900L1690 868L1740 835L1883 730" fill="none" stroke="#a9cba8" strokeWidth="7" />
      <Cased d={roads.trunk.join("")} fill="#c9a5ac" casing="#b9838f" w={9} />
      <Cased d={roads.primary.join("")} fill="#d0c4ba" casing="#a99a82" w={8} />
      <Cased d={roads.motorway.join("")} fill="#bb8fb3" casing="#b3729f" w={11} />
      <path d="M1660 512L1676 490L1698 495L1710 512L1700 530L1668 525ZM1745 740L1850 700L1850 715L1760 765L1725 775ZM1500 780L1560 775L1545 800L1520 815ZM1440 785L1470 790L1475 800L1460 805Z" fill="#bb8fb3" />

      <g fill="none" strokeLinejoin="round">
        {rails.map((d, i) => (
          <g key={i}>
            <path d={d} stroke="#68798f" strokeWidth="5" />
            <path d={d} stroke="#cdd8ea" strokeWidth="1.8" strokeDasharray="9 13" />
          </g>
        ))}
        <path d="M1367 550L1440 575" stroke="#68798f" strokeWidth="3" />
        <path d="M1585 770L1607 818Q1630 862 1650 864Q1668 864 1690 842L1760 790L1785 772" stroke="#66778f" strokeWidth="4" />
        <path d="M1340 1200L1362 1248M1346 1198L1368 1246M1687 905V928M1699 905V928M773 815L790 832M786 812L800 828" stroke="#56657c" strokeWidth="2" />
        <path d="M1820 880Q1850 860 1880 885Q1900 910 1902 930M1848 922L1890 890L1948 888M1890 880H1925M1820 775Q1850 800 1800 805" stroke="#9ba6c2" strokeWidth="3" />
      </g>
      <g fill="#7180b9">
        {stations.map(([x, y], i) => <rect key={i} x={x - 6} y={y - 6} width="12" height="12" />)}
      </g>
      <g fill="#84aaa4" clipPath="url(#cemeteryClip)">
        {tombs.map(([x, y], i) => (
          <path key={i} d={`M${x - 8} ${y + 2}V${y}H${x - 5}V${y - 9}Q${x} ${y - 18} ${x + 5} ${y - 9}V${y}H${x + 8}V${y + 2}Z`} />
        ))}
      </g>
      <path d="M1868 1252H1880V1245H1890V1273H1868ZM1624 1188H1640V1214H1624Z" fill="#aeddd4" />
      <path d="M1896 1275H1915V1290H1940V1298H1896Z" fill="#98bbbb" />
      <path d="M1732 1178H1744V1192H1762V1228H1732Z" fill="#d5e4e8" />
      <path d="M1745 1210H1755V1222H1745ZM1734 1213H1741V1228H1734Z" fill="#9dccd2" />

      {shields.map((s, i) => {
        const [fill, border, ink] = tones[s.tone];
        return (
          <g key={i}>
            <rect x={s.x} y={s.y} width={s.w} height="34" rx="4" fill={fill} stroke={border} strokeWidth="2" />
            <text x={s.x + s.w / 2} y={s.y + 24} textAnchor="middle" fontFamily={mapFont} fontSize="19.5" fontWeight="500" fill={ink}>{s.t}</text>
          </g>
        );
      })}
      {labels.map((l, i) => <MapText key={i} {...l} />)}
      <text fontFamily={mapFont} fontSize="16.5" fontWeight="500" fill={STREET} stroke="#c9a5ac" strokeWidth="3" paintOrder="stroke">
        <textPath href="#aydMill" textLength="104" lengthAdjust="spacingAndGlyphs">Ayd Mill Road</textPath>
      </text>
      <text fontFamily={mapFont} fontSize="15" fontWeight="500" fill={STREET} stroke="#bb8fb3" strokeWidth="3" paintOrder="stroke">
        <textPath href="#aydMillSouth" textLength="98" lengthAdjust="spacingAndGlyphs">Ayd Mill Road</textPath>
      </text>
      {exits.map(([t, x, y, w], i) => (
        <MapText key={i} t={t} x={x} y={y} w={w} s={19} i c="#8f4666" h="#d3d5e8" />
      ))}

      <g fill="none" stroke="#4a8af6" strokeWidth="6" strokeLinejoin="round">
        {boundaries.map((d, i) => <path key={i} d={d} />)}
      </g>
      {pins.map(([x, y]) => <Pin key={`${x}-${y}`} x={x} y={y} />)}
    </MapSvg>
  );
}

function Glyph({ d }: { d: string }) {
  return (
    <svg width="26" height="26" viewBox="0 0 26 26">
      <path d={d} stroke="#000" strokeWidth="4.4" fill="none" />
    </svg>
  );
}

export default function App() {
  const columns = [207, 217, 171, 503, 397, 799];
  return (
    <>
      <GlobalStyle />
      <Page>
        <Header>
          <Title>St. Paul, MN</Title>
          <Nav>
            <NavLink>Home Page</NavLink>
            <NavLink $spacing={0.4}>About the Project</NavLink>
          </Nav>
        </Header>

        <Main>
          <Form>
            <Label>Location Address:</Label>
            <Input defaultValue="St. Paul" />
            <Button $tone="#3778b5" $wide>Look Up</Button>
            <Label>Latitude:</Label>
            <Input placeholder="44.945604" />
            <Label>Longitude:</Label>
            <Input placeholder="-93.115654" />
            <Button $tone="#3778b5" $wide>Look Up</Button>
          </Form>

          <MapBox>
            <CityMap />
            <ZoomControl>
              <ZoomButton $first><Glyph d="M1 13H25M13 1V25" /></ZoomButton>
              <ZoomButton><Glyph d="M1 13H25" /></ZoomButton>
            </ZoomControl>
            <Popup>
              <strong>Capitol River</strong>
              <div>Number of Crimes: 184</div>
              <PopupClose viewBox="0 0 20 20">
                <path d="M2 2L18 18M18 2L2 18" stroke="#c3c3c3" strokeWidth="4.4" />
              </PopupClose>
            </Popup>
            <PopupTip />
            <Attribution>
              <a>Leaflet</a> | © <a>OpenStreetMap</a> contributors
            </Attribution>
          </MapBox>

          <Legend>
            <LegendTitle $spacing={0.3}>Marker Legend</LegendTitle>
            <LegendList $height={363}>
              <li><Swatch $tone="#4886c6" /><Wider>{"\u00a0: Neighborhood"}</Wider><br />Marker</li>
              <li><Swatch $tone="#57aa40" /><Wider>{"\u00a0: Incident Marker"}</Wider></li>
            </LegendList>
            <Button $tone="#bf623f">Remove All Incident Markers</Button>
            <LegendTitle $spacing={0.05}>Table Row Legend</LegendTitle>
            <LegendList>
              <li><Mark $tone="#dcdcdc">Gray:</Mark> Non-<br />Violent/Misc. Crime</li>
              <li><Mark $tone="#fbec64">Yellow:</Mark> Property Crime</li>
              <li><Mark $tone="#e37f7d">Red:</Mark> Violent Crime</li>
            </LegendList>
          </Legend>
        </Main>

        <TableHead>
          {columns.map((w, i) => <HeadCell key={i} $w={w} />)}
          <HeadCell $w={264} $last />
        </TableHead>

        <ScrollThumb />
        <StatusBubble>localhost:8000/index.html#close</StatusBubble>
      </Page>
    </>
  );
}
